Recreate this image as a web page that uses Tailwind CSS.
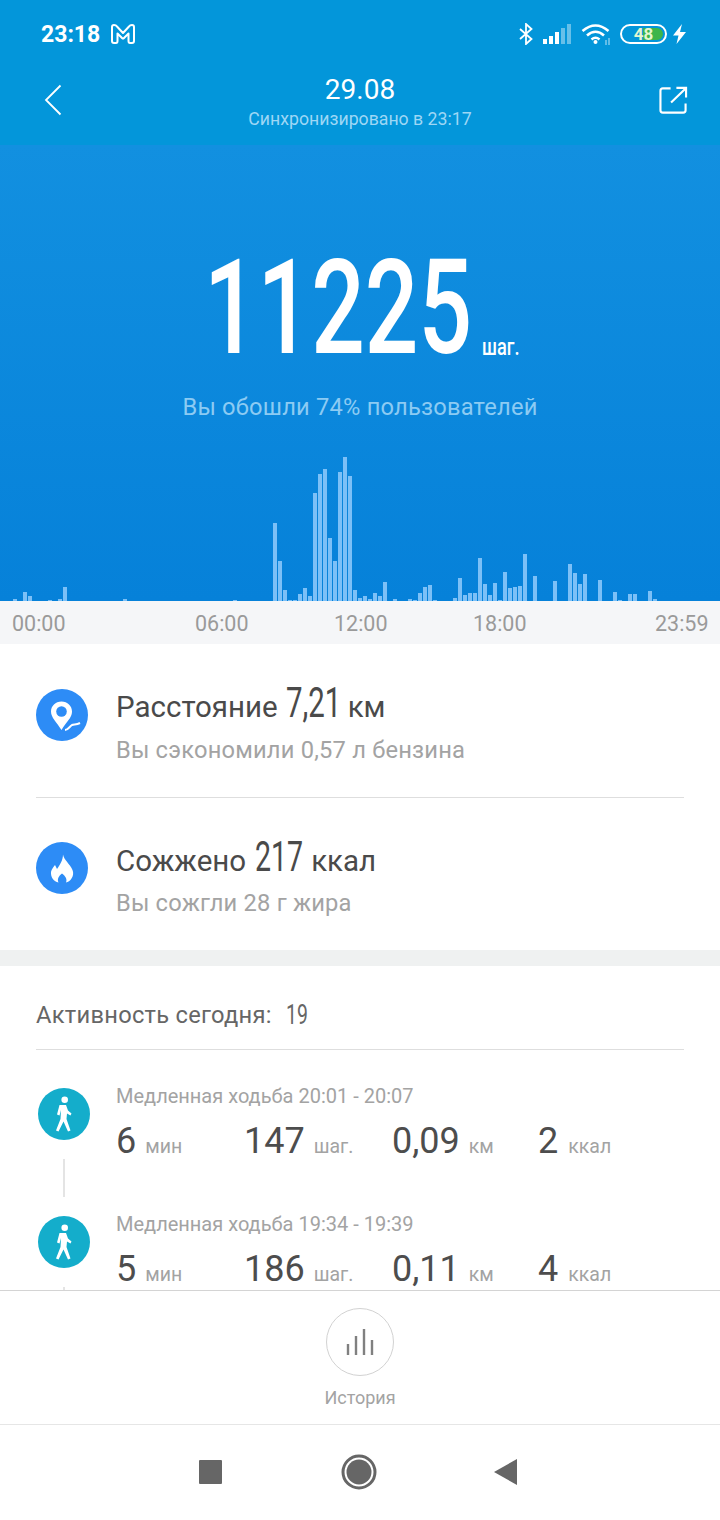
<!doctype html>
<html lang="ru"><head><meta charset="utf-8">
<script src="https://cdn.jsdelivr.net/npm/@tailwindcss/browser@4"></script></head>
<body class="m-0 bg-white">
<div class="w-[720px] h-[1520px] overflow-hidden flex flex-col font-['Roboto',sans-serif] bg-white">

<header class="h-[145px] bg-[#0396da] text-white shrink-0">
  <div class="h-[68px] pl-[41px] pr-[34px] flex items-center justify-between">
    <div class="flex items-center gap-[11px]">
      <span class="text-[23px] font-bold leading-none">23:18</span>
      <svg class="w-[24px] h-[20px]" viewBox="0 0 24 20" fill="none" stroke="#fff" stroke-width="2" stroke-linejoin="round"><path d="M1 3 Q1 1 3 1 Q5 1 6 2.500 L12 9 L18 2.500 Q19 1 21 1 Q23 1 23 3 V17 Q23 19 21 19 H19 Q17.500 19 17.500 17 V9.500 L13 14 Q12 15 11 14 L6.500 9.500 V17 Q6.500 19 5 19 H3 Q1 19 1 17 Z"/></svg>
    </div>
    <div class="flex items-center">
      <svg class="w-[14px] h-[22px] mr-[10px]" viewBox="0 0 14 22" fill="none" stroke="#fff" stroke-width="1.800"><path d="M1 6 L12.500 16 L7 21 V1 L12.500 6 L1 16"/></svg>
      <svg class="w-[28px] h-[21px] mr-[10px]" viewBox="0 0 28 21"><rect x="0" y="15" width="4" height="5" fill="#fff"/><rect x="6" y="12" width="4" height="8" fill="#fff"/><rect x="12" y="8" width="4" height="12" fill="#fff"/><rect x="18" y="4" width="4" height="16" fill="#fff" fill-opacity=".4"/><rect x="24" y="0" width="4" height="20" fill="#fff" fill-opacity=".4"/></svg>
      <svg class="w-[30px] h-[23px] mr-[9px]" viewBox="0 0 30 23" fill="none" stroke="#fff" stroke-width="2.600"><path d="M1.500 8 Q14.500 -3 27.500 8"/><path d="M6 12.500 Q14.500 5 23 12.500"/><path d="M10.500 16.500 Q14.500 13 18.500 16.500"/><circle cx="14.500" cy="19" r="2" fill="#fff" stroke="none"/><path d="M25 17 V22 M28 15 V22" stroke-width="1.500" stroke-opacity=".5"/></svg>
      <div class="relative w-[47px] h-[20px] rounded-full border-2 border-white mr-[6px] overflow-hidden flex items-center justify-center">
        <div class="absolute right-[2px] top-[2px] bottom-[2px] w-[20px] rounded-r-full bg-[#3cb54a]"></div>
        <span class="relative text-[17px] font-bold leading-none text-[#e4f7d0]">48</span>
      </div>
      <svg class="w-[13px] h-[20px]" viewBox="0 0 13 20"><path d="M9 0 L0 11.500 H5.500 L3.500 20 L13 8 H7 Z" fill="#fff"/></svg>
    </div>
  </div>
  <div class="h-[77px] pl-[44px] pr-[32px] grid grid-cols-[1fr_auto_1fr]">
    <svg class="w-[18px] h-[32px] mt-[16px]" viewBox="0 0 18 32" fill="none" stroke="#fff" stroke-width="1.800"><path d="M16.500 1.500 L2 16 L16.500 30.500"/></svg>
    <div class="text-center pt-[4px] -ml-[12px]">
      <div class="text-[28px] leading-[36px]">29.08</div>
      <div class="text-[17.700px] leading-[22px] text-[#9ed7f5]">Синхронизировано в 23:17</div>
    </div>
    <svg class="justify-self-end w-[29px] h-[29px] mt-[18px]" viewBox="0 0 30 30" fill="none" stroke="#fff" stroke-width="2.200"><path d="M12 2.500 H4 Q1.500 2.500 1.500 5 V25 Q1.500 27.500 4 27.500 H25 Q27.500 27.500 27.500 25 V18"/><path d="M12.500 17 L27 3 M18 2 H28 V12"/></svg>
  </div>
</header>

<section class="h-[456px] shrink-0 bg-linear-to-b from-[#1290e0] to-[#0681d9] flex flex-col">
  <div class="h-[112px] mt-[107px] flex justify-center items-end">
    <span class="text-[131px] font-medium leading-[112px] text-white inline-block w-[266px] ml-[3px] scale-x-[.72] origin-left whitespace-nowrap">11225</span>
    <span class="text-[24px] font-medium leading-[28px] text-white inline-block w-[38px] scale-x-[.76] origin-left ml-[12px] mb-[3px]">шаг.</span>
  </div>
  <p class="mt-[28px] text-center text-[23.700px] leading-[30px] text-[#8ccbf3] tracking-[.2px]">Вы обошли 74% пользователей</p>
  <svg class="mt-auto block w-[720px] h-[146px]" viewBox="0 0 720 146" fill="#7cc0f7">
    <path d="M13 146v-2h4v2zM23 146v-9h4v9zM28 146v-5h4v5zM48 146v-1h4v1zM58 146v-2h4v2zM63 146v-14h4v14zM123 146v-2h4v2zM233 146v-1h4v1zM273 146v-78h4v78zM278 146v-40h4v40zM283 146v-11h4v11zM288 146v-1h4v1zM293 146v-1h4v1zM298 146v-7h4v7zM303 146v-13h4v13zM308 146v-5h4v5zM313 146v-108h4v108zM318 146v-127h4v127zM323 146v-132h4v132zM328 146v-63h4v63zM333 146v-40h4v40zM338 146v-129h4v129zM343 146v-144h4v144zM348 146v-125h4v125zM353 146v-11h4v11zM358 146v-3h4v3zM363 146v-5h4v5zM368 146v-2h4v2zM373 146v-8h4v8zM378 146v-5h4v5zM383 146v-19h4v19zM393 146v-2h4v2zM408 146v-2h4v2zM413 146v-1h4v1zM418 146v-8h4v8zM423 146v-14h4v14zM428 146v-16h4v16zM433 146v-1h4v1zM453 146v-3h4v3zM458 146v-23h4v23zM463 146v-6h4v6zM468 146v-8h4v8zM473 146v-8h4v8zM478 146v-43h4v43zM483 146v-17h4v17zM488 146v-6h4v6zM493 146v-18h4v18zM498 146v-1h4v1zM503 146v-29h4v29zM508 146v-13h4v13zM513 146v-14h4v14zM518 146v-15h4v15zM523 146v-47h4v47zM533 146v-25h4v25zM553 146v-20h4v20zM568 146v-37h4v37zM573 146v-28h4v28zM578 146v-17h4v17zM583 146v-27h4v27zM598 146v-21h4v21zM613 146v-9h4v9zM618 146v-1h4v1zM628 146v-7h4v7zM633 146v-7h4v7zM648 146v-10h4v10zM653 146v-2h4v2z"/>
  </svg>
</section>

<div class="h-[43px] shrink-0 bg-[#f5f6f8] pl-[12px] pt-[4px] flex items-center text-[21.500px] text-[#9a9a9a]">
  <span class="w-[183px]">00:00</span><span class="w-[139px]">06:00</span><span class="w-[139px]">12:00</span><span class="w-[182px]">18:00</span><span>23:59</span>
</div>

<section class="h-[306px] shrink-0 px-[36px]">
  <div class="h-[154px] border-b border-[#dedede] flex items-start pt-[45px] gap-[28px]">
    <svg class="w-[52px] h-[52px] shrink-0" viewBox="0 0 52 52"><circle cx="26" cy="26" r="26" fill="#2d8cf6"/><path d="M25.500 12.500 C19.500 12.500 15 17 15 22.500 C15 28.500 20.500 33 25.500 41 C26.500 39 28 37 29.500 35 C32.500 31 36 27.500 36 22.500 C36 17 31.500 12.500 25.500 12.500 Z" fill="#fff"/><circle cx="25.500" cy="22.500" r="5.300" fill="#2d8cf6"/><path d="M29 41 C32 41 33 38 36 36 C38 35 40 36 44 34" stroke="#fff" stroke-width="2" fill="none"/></svg>
    <div class="-mt-[6px]">
      <div class="h-[40px] flex items-baseline text-[29.500px] leading-[40px] text-[#4a4a4a] whitespace-nowrap">Расстояние<span class="inline-block w-[62px] ml-[8px] text-[42px] leading-[40px] scale-x-[.7] origin-left">7,21</span><span>км</span></div>
      <div class="mt-[12px] text-[23.700px] leading-[30px] text-[#a3a3a3] tracking-[.2px] whitespace-nowrap">Вы сэкономили 0,57 л бензина</div>
    </div>
  </div>
  <div class="flex items-start pt-[44px] gap-[28px]">
    <svg class="w-[52px] h-[52px] shrink-0" viewBox="0 0 52 52"><circle cx="26" cy="26" r="26" fill="#2d8cf6"/><path d="M27 12.500 C28 18 34 22 36.500 28 C39 34 34 40 30 40.500 C31.500 37.500 29.500 34 26 31.500 C22.500 34 21 37.500 22.500 40.500 C18 40 14.500 35 15 30 C15.500 27 17.500 25 19 23 L21 27 C24 23 27 18 27 12.500 Z" fill="#fff"/></svg>
    <div class="-mt-[5px]">
      <div class="h-[40px] flex items-baseline text-[29.500px] leading-[40px] text-[#4a4a4a] whitespace-nowrap">Сожжено<span class="inline-block w-[56px] ml-[9px] text-[42px] leading-[40px] scale-x-[.68] origin-left">217</span><span>ккал</span></div>
      <div class="mt-[11px] text-[23.700px] leading-[30px] text-[#a3a3a3] tracking-[.2px] whitespace-nowrap">Вы сожгли 28 г жира</div>
    </div>
  </div>
</section>

<div class="h-[16px] shrink-0 bg-[#eff1f1]"></div>

<section class="h-[324px] shrink-0 overflow-hidden px-[36px]">
  <div class="h-[84px] pt-[16px] border-b border-[#dedede] flex items-center text-[23.700px] text-[#666] tracking-[.27px]">Активность сегодня:<span class="inline-block ml-[14px] w-[24px] text-[27px] scale-x-[.72] origin-left">19</span></div>
  <div class="flex mt-[38px] h-[128px]">
    <div class="w-[80px] shrink-0 flex flex-col items-center pr-[24px]">
      <svg class="w-[52px] h-[52px] shrink-0" viewBox="0 0 52 52"><circle cx="26" cy="26" r="26" fill="#14adcb"/><circle cx="26.700" cy="11.700" r="3.300" fill="#fff"/><path d="M21.500 17 H28 L30 22.500 L33.500 25.500 L32.500 27.500 L29 25.500 L28.500 31 L32.500 42.500 L30 43.500 L25.500 33.500 L20.500 43.500 L18 42.500 L22.500 31 L23 22 L21.500 27.500 L19 26.500 Z" fill="#fff"/></svg>
      <div class="w-[2px] h-[38px] mt-[19px] bg-[#e4e4e4]"></div>
    </div>
    <div class="-mt-[5px]">
      <div class="text-[20px] leading-[26px] text-[#a3a3a3] whitespace-nowrap">Медленная ходьба 20:01 - 20:07</div>
      <div class="mt-[10px] grid grid-cols-[128px_148px_146px_100px] items-baseline text-[19.500px] text-[#a3a3a3]">
        <div class="whitespace-nowrap"><span class="text-[36px] leading-[44px] text-[#4d4d4d] mr-[9px]">6</span>мин</div>
        <div class="whitespace-nowrap"><span class="text-[36px] leading-[44px] text-[#4d4d4d] mr-[9px]">147</span>шаг.</div>
        <div class="whitespace-nowrap"><span class="text-[36px] leading-[44px] text-[#4d4d4d] mr-[9px]">0,09</span>км</div>
        <div class="whitespace-nowrap"><span class="text-[36px] leading-[44px] text-[#4d4d4d] mr-[10px]">2</span>ккал</div>
      </div>
    </div>
  </div>
  <div class="flex h-[128px]">
    <div class="w-[80px] shrink-0 flex flex-col items-center pr-[24px]">
      <svg class="w-[52px] h-[52px] shrink-0" viewBox="0 0 52 52"><circle cx="26" cy="26" r="26" fill="#14adcb"/><circle cx="26.700" cy="11.700" r="3.300" fill="#fff"/><path d="M21.500 17 H28 L30 22.500 L33.500 25.500 L32.500 27.500 L29 25.500 L28.500 31 L32.500 42.500 L30 43.500 L25.500 33.500 L20.500 43.500 L18 42.500 L22.500 31 L23 22 L21.500 27.500 L19 26.500 Z" fill="#fff"/></svg>
      <div class="w-[2px] h-[38px] mt-[19px] bg-[#e4e4e4]"></div>
    </div>
    <div class="-mt-[5px]">
      <div class="text-[20px] leading-[26px] text-[#a3a3a3] whitespace-nowrap">Медленная ходьба 19:34 - 19:39</div>
      <div class="mt-[10px] grid grid-cols-[128px_148px_146px_100px] items-baseline text-[19.500px] text-[#a3a3a3]">
        <div class="whitespace-nowrap"><span class="text-[36px] leading-[44px] text-[#4d4d4d] mr-[9px]">5</span>мин</div>
        <div class="whitespace-nowrap"><span class="text-[36px] leading-[44px] text-[#4d4d4d] mr-[9px]">186</span>шаг.</div>
        <div class="whitespace-nowrap"><span class="text-[36px] leading-[44px] text-[#4d4d4d] mr-[9px]">0,11</span>км</div>
        <div class="whitespace-nowrap"><span class="text-[36px] leading-[44px] text-[#4d4d4d] mr-[10px]">4</span>ккал</div>
      </div>
    </div>
  </div>
</section>

<nav class="h-[134px] shrink-0 border-t border-[#d4d4d4] flex flex-col items-center pt-[17px]">
  <div class="w-[68px] h-[68px] rounded-full border border-[#d2d2d2] flex items-center justify-center">
    <svg class="w-[30px] h-[28px]" viewBox="0 0 30 28" fill="#808080"><rect x="1.800" y="16" width="2.400" height="11"/><rect x="9.800" y="8" width="2.400" height="19"/><rect x="17.800" y="1" width="2.400" height="26"/><rect x="25.800" y="12" width="2.400" height="15"/></svg>
  </div>
  <div class="mt-[11px] text-[18px] leading-[22px] text-[#a3a3a3]">История</div>
</nav>

<div class="flex-1 border-t border-[#e6e6e6] flex items-center justify-center pb-[2px]">
  <div class="w-[23px] h-[24px] rounded-[1px] bg-[#666] -ml-[4px]"></div>
  <svg class="w-[36px] h-[36px] ml-[119px]" viewBox="0 0 36 36"><circle cx="18" cy="18" r="16" fill="none" stroke="#666" stroke-width="3"/><circle cx="18" cy="18" r="12.500" fill="#666"/></svg>
  <svg class="w-[24px] h-[26px] ml-[117px]" viewBox="0 0 24 26"><path d="M0 13 L23 0 V26 Z" fill="#666"/></svg>
</div>
</div>
</body></html>
